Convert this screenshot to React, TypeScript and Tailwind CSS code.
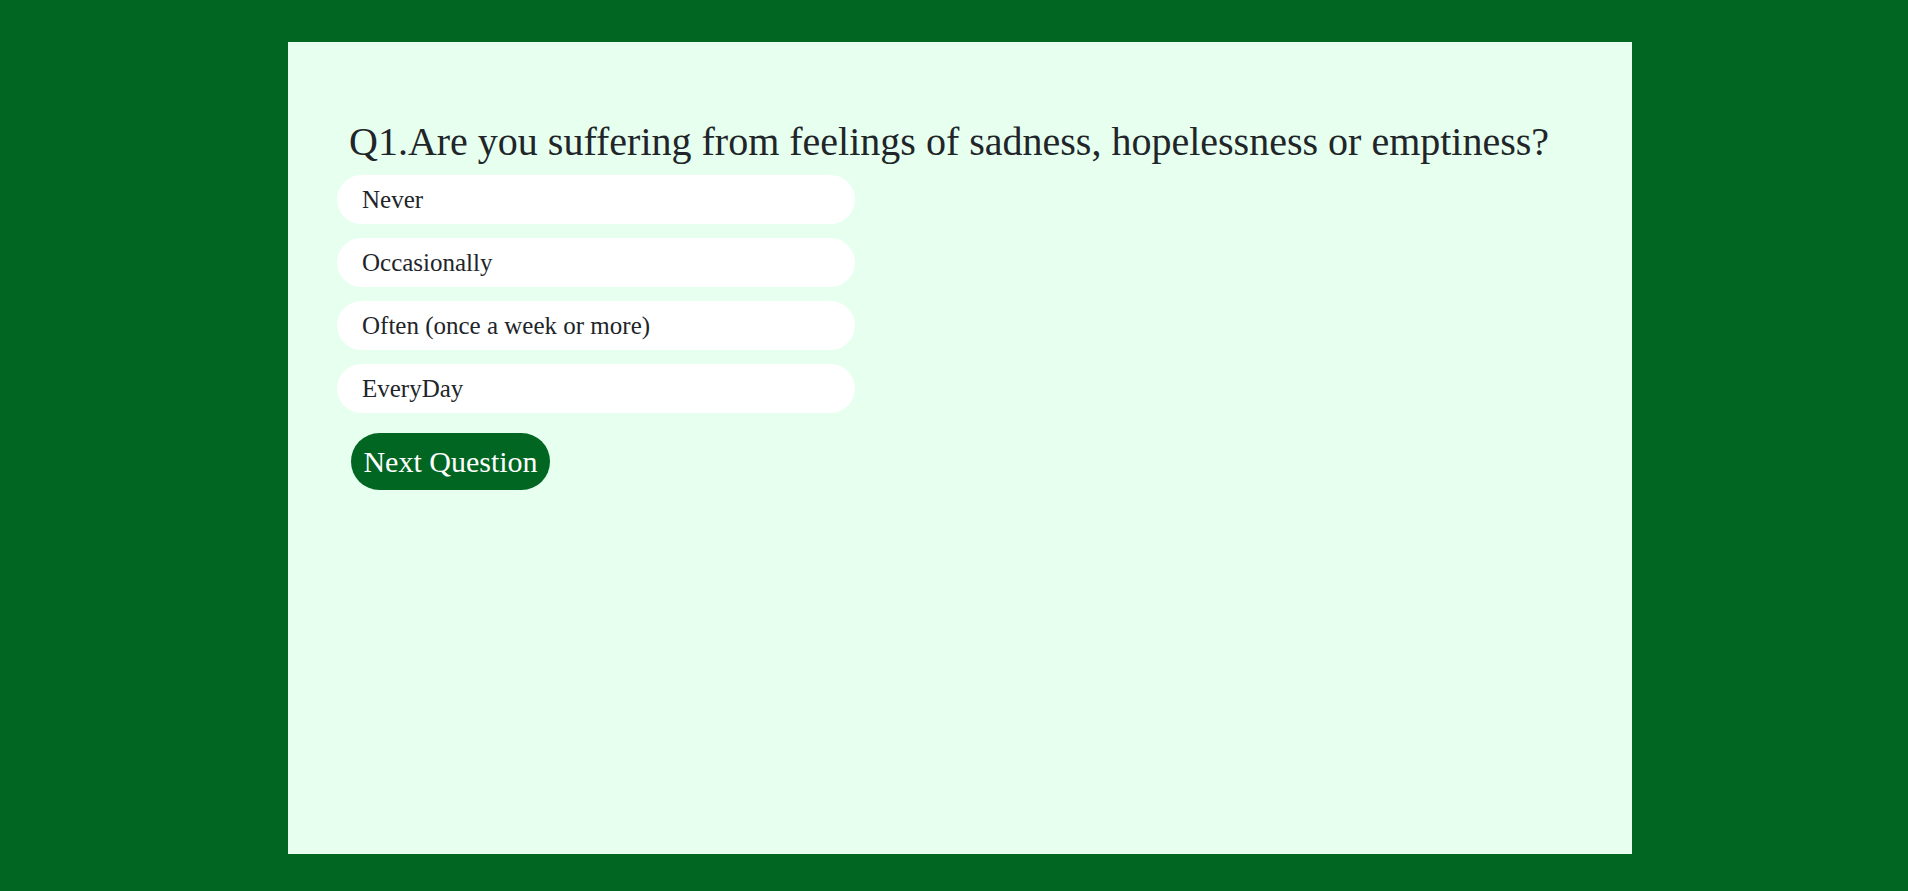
import React, { useState } from "react";

const options = [
  "Never",
  "Occasionally",
  "Often (once a week or more)",
  "EveryDay",
];

export default function App() {
  const [selected, setSelected] = useState<number | null>(null);

  return (
    <main
      className="min-h-screen w-full bg-[#006622] pt-[42px] pb-[37px]"
      style={{ fontFamily: '"Liberation Serif", "Times New Roman", serif' }}
    >
      <div className="ml-[288px] h-[812px] w-[1344px] bg-[#e6ffee] px-[49px] pt-[76px] text-[#212529]">
        <h2 className="mb-[9px] ml-[12px] text-[40px] leading-[1.2] font-normal">
          Q1.Are you suffering from feelings of sadness, hopelessness or
          emptiness?
        </h2>
        <div className="flex w-[518px] flex-col gap-[14px]">
          {options.map((opt, i) => (
            <button
              key={opt}
              type="button"
              onClick={() => setSelected(i)}
              className={
                "flex h-[49px] items-center rounded-full pl-[25px] text-left text-[25px] leading-normal " +
                (selected === i ? "bg-[#cdebd7]" : "bg-white")
              }
            >
              {opt}
            </button>
          ))}
        </div>
        <button
          type="button"
          className="mt-[20px] ml-[14px] flex h-[57px] w-[199px] items-center justify-center rounded-full bg-[#006622] text-[30px] leading-normal text-white"
        >
          Next Question
        </button>
      </div>
    </main>
  );
}
